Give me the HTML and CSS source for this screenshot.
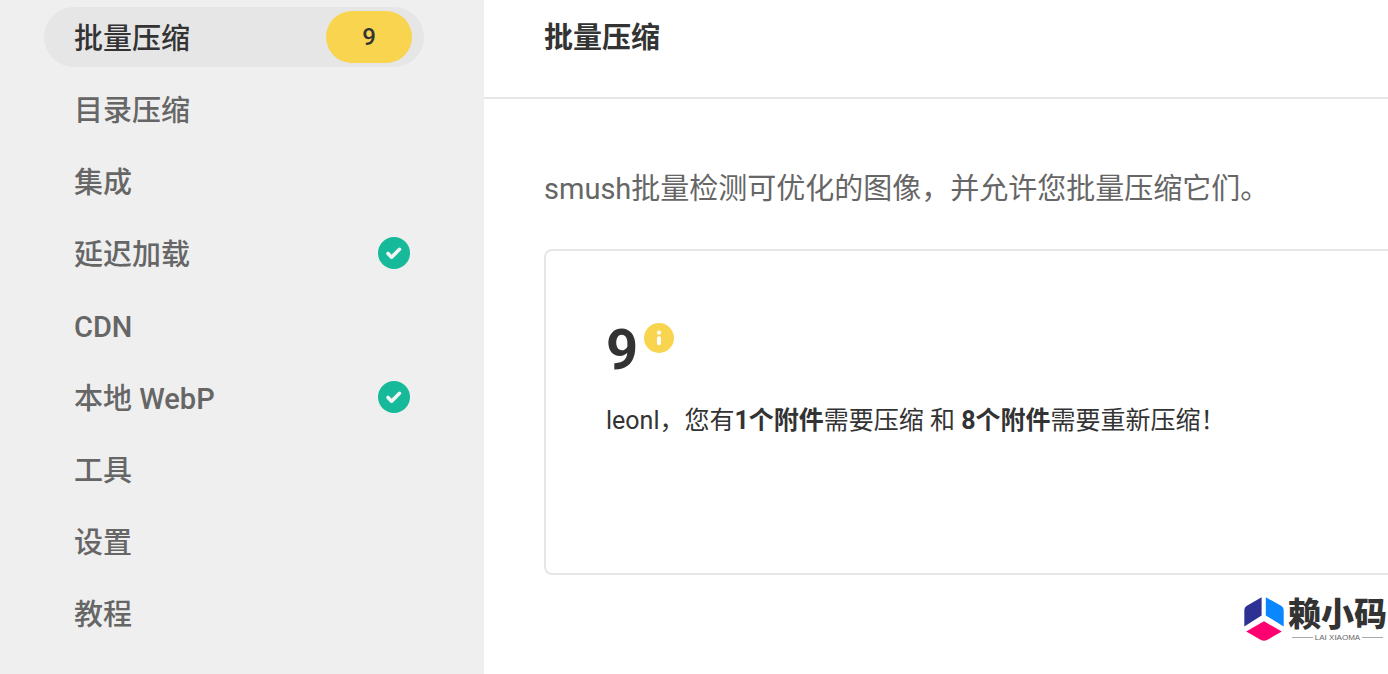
FILE: index.html
```html
<!DOCTYPE html>
<html lang="zh-CN">
<head>
<meta charset="utf-8">
<meta name="viewport" content="width=device-width, initial-scale=1">
<title>批量压缩</title>
<link rel="stylesheet" href="styles.css">
</head>
<body>
<div class="layout">
  <nav class="sidebar">
    <ul class="menu">
      <li><a class="menu-link active" href="#bulk"><span class="label">批量压缩</span><span class="badge">9</span></a></li>
      <li><a class="menu-link" href="#directory"><span class="label">目录压缩</span></a></li>
      <li><a class="menu-link" href="#integrations"><span class="label">集成</span></a></li>
      <li><a class="menu-link" href="#lazy"><span class="label">延迟加载</span><svg class="check" viewBox="0 0 32 32" aria-hidden="true"><circle cx="16" cy="16" r="16" fill="#17b99b"/><path d="M10 16.500l3.600 3.700 7.900-7.900" fill="none" stroke="#f4f4f4" stroke-width="3.600" stroke-linecap="round" stroke-linejoin="round"/></svg></a></li>
      <li><a class="menu-link" href="#cdn"><span class="label">CDN</span></a></li>
      <li><a class="menu-link" href="#webp"><span class="label">本地 WebP</span><svg class="check" viewBox="0 0 32 32" aria-hidden="true"><circle cx="16" cy="16" r="16" fill="#17b99b"/><path d="M10 16.500l3.600 3.700 7.900-7.900" fill="none" stroke="#f4f4f4" stroke-width="3.600" stroke-linecap="round" stroke-linejoin="round"/></svg></a></li>
      <li><a class="menu-link" href="#tools"><span class="label">工具</span></a></li>
      <li><a class="menu-link" href="#settings"><span class="label">设置</span></a></li>
      <li><a class="menu-link" href="#tutorials"><span class="label">教程</span></a></li>
    </ul>
  </nav>
  <main class="content">
    <header class="header"><h1 class="title">批量压缩</h1></header>
    <div class="body">
      <p class="intro">smush批量检测可优化的图像，并允许您批量压缩它们。</p>
      <section class="card">
        <div class="summary">
          <strong class="count">9</strong>
          <svg class="info" viewBox="0 0 30 30" aria-hidden="true"><circle cx="15" cy="15" r="15" fill="#f8d44f"/><circle cx="15" cy="9.700" r="2.100" fill="#fff"/><rect x="13" y="13.200" width="4" height="9" rx="1.800" fill="#fff"/></svg>
        </div>
        <p class="message">leonl，您有<strong>1个附件</strong>需要压缩 和 <strong>8个附件</strong>需要重新压缩！</p>
      </section>
    </div>
  </main>
</div>
<div class="brand">
  <svg class="brand-mark" viewBox="0 0 40 44" aria-hidden="true">
    <path d="M17.600.3V18.500L.3 29.500V13Q.3 10.300 2.500 8.900Z" fill="#2d3193"/>
    <path d="M21.800.3L37.500 8.900Q39.700 10.300 39.700 13V29.500L21.800 18.500Z" fill="#0a86ff"/>
    <path d="M20 24.300L37.800 34.500L23 43Q20 44.600 17 43L2.200 34.500Z" fill="#ff0071"/>
  </svg>
  <div class="brand-text">
    <span class="brand-name">赖小码</span>
    <span class="brand-sub">LAI XIAOMA</span>
  </div>
</div>
</body>
</html>
```
FILE: styles.css
```css
* {
  box-sizing: border-box;
}

body {
  margin: 0;
  background: #fff;
  color: #333;
  font-family: Roboto, "Noto Sans CJK SC", sans-serif;
  overflow-x: hidden;
}

.layout {
  display: flex;
  min-height: 100vh;
}

.sidebar {
  flex: 0 0 484px;
  padding: 7px 60px 0 44px;
  background: #efefef;
}

.menu {
  display: grid;
  gap: 12px;
  margin: 0;
  padding: 0;
  list-style: none;
}

.menu-link {
  display: flex;
  align-items: center;
  justify-content: space-between;
  height: 60px;
  padding: 0 12px 0 30px;
  border-radius: 30px;
  color: #666;
  font-size: 29px;
  font-weight: 500;
  text-decoration: none;
}

.menu-link.active {
  background: #e6e6e6;
  color: #333;
}

.label {
  padding-top: 5px;
  line-height: 55px;
}

.badge {
  width: 86px;
  border-radius: 26px;
  background: #f8d44f;
  font-size: 24px;
  line-height: 52px;
  text-align: center;
}

.check {
  width: 32px;
  height: 32px;
  margin-right: 2px;
}

.content {
  flex: 1;
  min-width: 0;
}

.header {
  padding: 15px 60px 36px;
  border-bottom: 2px solid #e6e6e6;
}

.title {
  margin: 0;
  font-size: 29px;
  font-weight: 700;
  line-height: 46px;
}

.body {
  padding: 60px 0 0 60px;
}

.intro {
  margin: 0 0 30px;
  color: #666;
  font-size: 29px;
  line-height: 60px;
  white-space: nowrap;
}

.card {
  padding: 60px 0 122px 60px;
  border: 2px solid #e6e6e6;
  border-right: 0;
  border-radius: 8px 0 0 8px;
}

.summary {
  display: flex;
  align-items: flex-start;
  gap: 6px;
  padding-top: 12px;
}

.count {
  font-size: 56px;
  line-height: 54px;
}

.info {
  width: 30px;
  height: 30px;
}

.message {
  margin: 14px 0 0;
  font-size: 25px;
  line-height: 60px;
  white-space: nowrap;
}

.brand {
  position: absolute;
  top: 597px;
  right: 1px;
  display: flex;
  gap: 4px;
}

.brand-mark {
  width: 40px;
  height: 44px;
}

.brand-text {
  display: flex;
  flex-direction: column;
}

.brand-name {
  font-size: 33px;
  font-weight: 900;
  line-height: 36px;
}

.brand-sub {
  display: flex;
  align-items: center;
  gap: 2px;
  padding: 0 4px;
  color: #666;
  font-family: "Liberation Sans", Arial, sans-serif;
  font-size: 8px;
  line-height: 9px;
  white-space: nowrap;
}

.brand-sub::before,
.brand-sub::after {
  content: "";
  flex: 1;
  height: 1px;
  background: #aaa;
}
```
